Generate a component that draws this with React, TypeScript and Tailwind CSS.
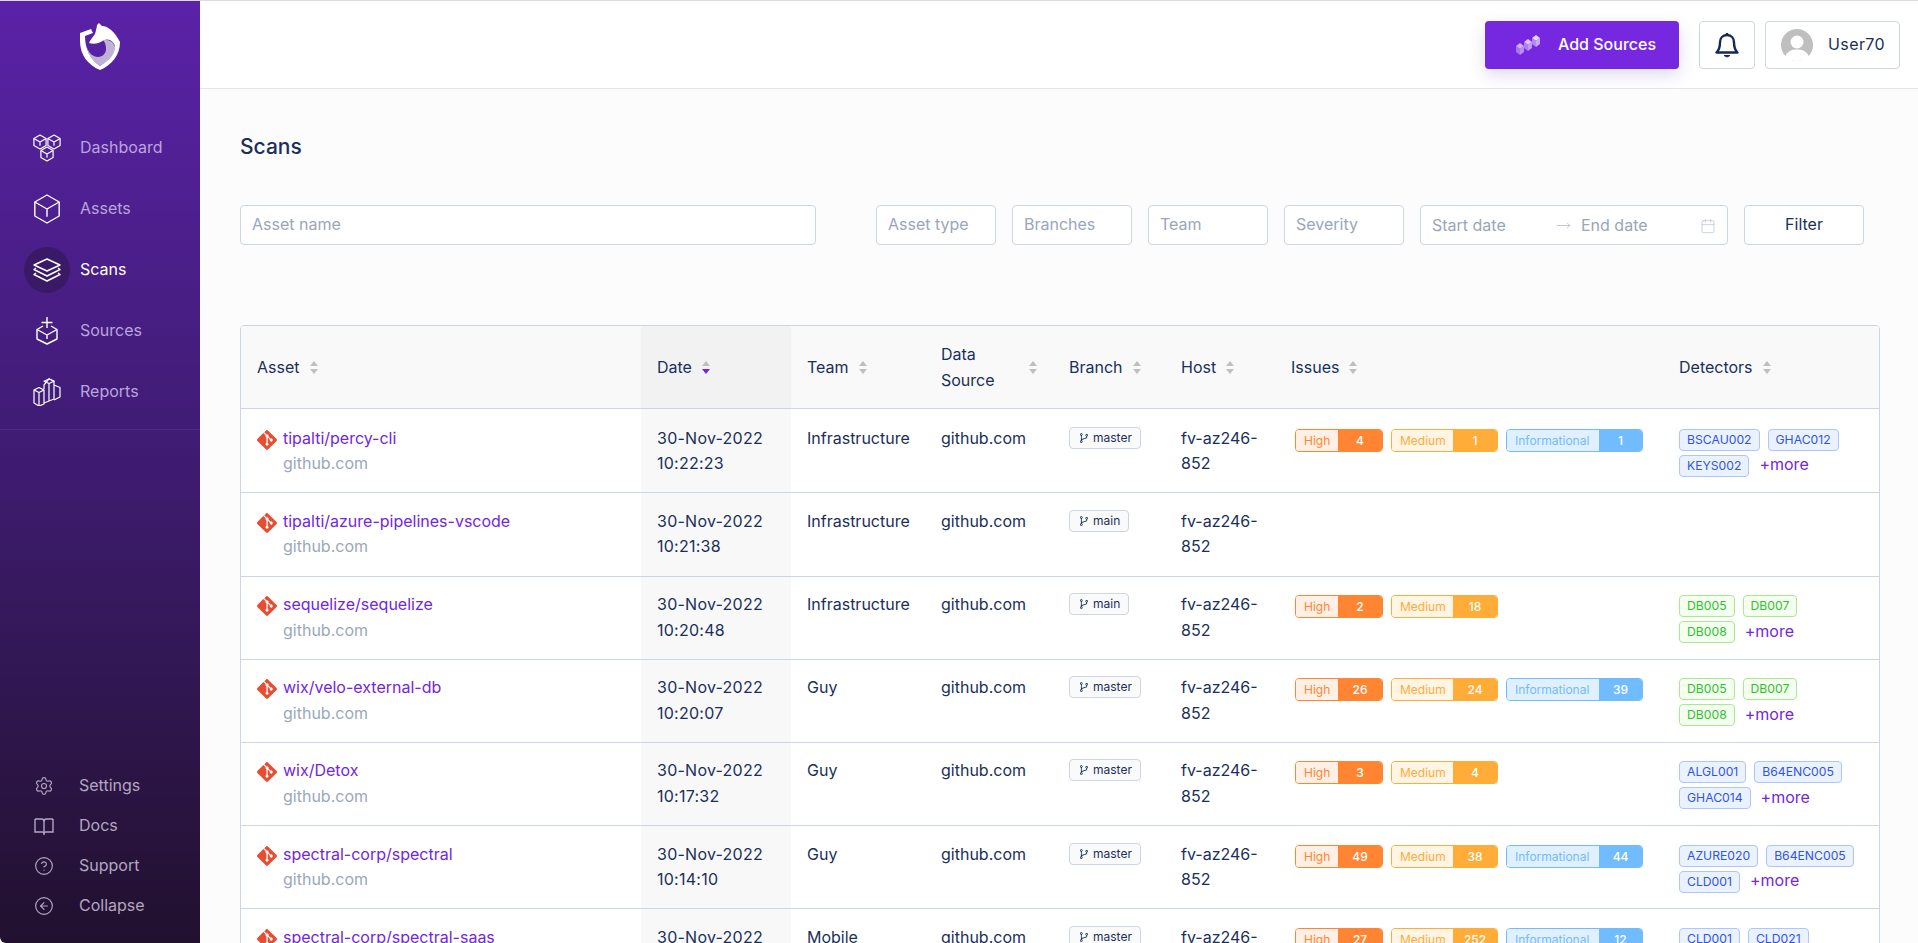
import React from "react";
import { SiGit } from "react-icons/si";
import { AiOutlineBranches } from "react-icons/ai";
import { Settings, CircleHelp, CircleArrowLeft, Calendar, MoveRight } from "lucide-react";

const hex = (cx: number, cy: number, r: number) => {
  const w = r * 0.87;
  const h = r * 0.5;
  return `M${cx} ${cy - r}L${cx + w} ${cy - h}V${cy + h}L${cx} ${cy + r}L${cx - w} ${cy + h}V${cy - h}Z`;
};
const why = (cx: number, cy: number, r: number) => {
  const w = r * 0.87;
  const h = r * 0.5;
  return `M${cx - w} ${cy - h}L${cx} ${cy}L${cx + w} ${cy - h}M${cx} ${cy}V${cy + r * 0.55}`;
};

function Logo() {
  return (
    <svg width="40" height="50" viewBox="0 0 40 50">
      <path d="M0 12L11 8L13 12L5 15C5 28 10 38 20 45C30 38 35 30 35 21L40 21C40 34 32 44 20 49C8 44 0 34 0 20Z" fill="#fff" />
      <path d="M23 19C30 18 35 22 35 28C34 35 27 41 20 45C13 40 8 34 6 24C8 31 12 36 18 36C23 36 26 32 26 28C26 24 25 21 23 19Z" fill="#bfb2d6" />
      <path d="M19 2L22 5C28 5 35 11 40 21L36 27C34 20 29 17 24 19C20 22 14 24 9 22C10 19 13 16 15 13C16 9 17 6 17 4Z" fill="#fff" />
    </svg>
  );
}

function IconDashboard() {
  return (
    <svg width="28" height="28" viewBox="0 0 28 28" fill="none" stroke="#fff" strokeWidth="1.2" strokeLinejoin="round">
      {[[7, 8], [21, 8], [14, 20]].map(([x, y]) => (
        <g key={x}>
          <path d={hex(x, y, 7)} />
          <path d={why(x, y, 7)} />
        </g>
      ))}
    </svg>
  );
}
function IconAssets() {
  return (
    <svg width="28" height="30" viewBox="0 0 28 30" fill="none" stroke="#fff" strokeWidth="1.4" strokeLinejoin="round">
      <path d={hex(14, 15, 14)} />
      <path d={why(14, 15, 14)} />
    </svg>
  );
}
function IconScans() {
  return (
    <svg width="28" height="24" viewBox="0 0 28 24" fill="none" stroke="#fff" strokeWidth="1.4" strokeLinejoin="round">
      <path d="M14 1L27 7L14 13L1 7Z" />
      <path d="M3 10L1 11.5L14 18L27 11.5L25 10" />
      <path d="M3 15L1 16.5L14 23L27 16.5L25 15" />
    </svg>
  );
}
function IconSources() {
  return (
    <svg width="22" height="28" viewBox="0 0 22 28" fill="none" stroke="#fff" strokeWidth="1.4" strokeLinejoin="round">
      <path d="M11 0V11M5.5 5.5H16.5" />
      <path d="M7 9L1 12.5V22L11 27L21 22V12.5L15 9" />
      <path d="M1 12.5L11 18L21 12.5M11 18V22" />
    </svg>
  );
}
function IconReports() {
  return (
    <svg width="28" height="28" viewBox="0 0 28 28" fill="none" stroke="#fff" strokeWidth="1.2" strokeLinejoin="round">
      <path d="M1 12L6 9.5L11 12V26L6 28L1 25Z" />
      <path d="M1 12L6 14.5L11 12M6 14.5V28" />
      <path d="M11 11V7L16 0.8L21 3V21L11 25" />
      <path d="M11 3.2L16 1L21 3.2L16 5.5ZM16 5.5V23" />
      <path d="M21 7L27 9.5V19L21 22" />
    </svg>
  );
}

function IconBook() {
  return (
    <svg width="20" height="20" viewBox="0 0 20 20" fill="none" stroke="#b3a6c0" strokeWidth="1.4">
      <path d="M1 3H7.5C9 3 10 4 10 5.5V19" />
      <path d="M19 3H12.5C11 3 10 4 10 5.5" />
      <path d="M1 3V16H8.5C9.4 16 10 16.5 10 17.5C10 16.5 10.6 16 11.5 16H19V3" />
    </svg>
  );
}

function IconCubes() {
  const cube = (x: number, y: number, o: number) => (
    <g key={x} opacity={o}>
      <path d={`M${x} ${y + 3}L${x + 4} ${y}L${x + 8} ${y + 3}L${x + 4} ${y + 6}Z`} fill="#e6d5fb" />
      <path d={`M${x} ${y + 3}L${x + 4} ${y + 6}V${y + 12}L${x} ${y + 9}Z`} fill="#b48af0" />
      <path d={`M${x + 8} ${y + 3}L${x + 4} ${y + 6}V${y + 12}L${x + 8} ${y + 9}Z`} fill="#c9a8f5" />
    </g>
  );
  return (
    <svg width="26" height="22" viewBox="0 0 26 22">
      {cube(0, 9, 0.8)}
      {cube(8, 5, 0.9)}
      {cube(16, 1, 1)}
    </svg>
  );
}

function IconBell() {
  return (
    <svg width="24" height="26" viewBox="0 0 24 26" fill="none" stroke="#14295a" strokeWidth="2.4" strokeLinejoin="round">
      <path d="M12 3C7.5 3 5 6.5 5 10.5C5 15.5 4 18 1.5 20.5H22.5C20 18 19 15.5 19 10.5C19 6.5 16.5 3 12 3Z" />
      <path d="M12 1V3" />
      <path d="M9 23.5H15L12 25Z" fill="#14295a" strokeWidth="1" />
    </svg>
  );
}

function Avatar() {
  return (
    <svg width="32" height="32" viewBox="0 0 32 32">
      <circle cx="16" cy="16" r="16" fill="#bfbfbf" />
      <circle cx="16" cy="13" r="6.5" fill="#fff" />
      <path d="M4 28C6 22 11 20.5 16 20.5C21 20.5 26 22 28 28C25 30.5 21 32 16 32C11 32 7 30.5 4 28Z" fill="#fff" />
    </svg>
  );
}

function Sort({ active }: { active?: boolean }) {
  return (
    <svg width="8" height="13" viewBox="0 0 8 13" className="ml-2.5 shrink-0">
      <path d="M4 0L8 5H0Z" fill="#bfbfbf" />
      <path d="M4 13L8 8H0Z" fill={active ? "#7326e0" : "#bfbfbf"} />
    </svg>
  );
}

const nav = [
  { label: "Dashboard", icon: <IconDashboard /> },
  { label: "Assets", icon: <IconAssets /> },
  { label: "Scans", icon: <IconScans />, active: true },
  { label: "Sources", icon: <IconSources /> },
  { label: "Reports", icon: <IconReports /> },
];

const foot = [
  { label: "Settings", icon: <Settings size={20} strokeWidth={1.4} /> },
  { label: "Docs", icon: <IconBook /> },
  { label: "Support", icon: <CircleHelp size={20} strokeWidth={1.4} /> },
  { label: "Collapse", icon: <CircleArrowLeft size={20} strokeWidth={1.4} /> },
];

type Row = {
  asset: string;
  time: string;
  team: string;
  branch: string;
  high?: number;
  medium?: number;
  info?: number;
  tags: string[];
  green?: boolean;
  more?: boolean;
};

const rows: Row[] = [
  { asset: "tipalti/percy-cli", time: "10:22:23", team: "Infrastructure", branch: "master", high: 4, medium: 1, info: 1, tags: ["BSCAU002", "GHAC012", "KEYS002"], more: true },
  { asset: "tipalti/azure-pipelines-vscode", time: "10:21:38", team: "Infrastructure", branch: "main", tags: [] },
  { asset: "sequelize/sequelize", time: "10:20:48", team: "Infrastructure", branch: "main", high: 2, medium: 18, tags: ["DB005", "DB007", "DB008"], green: true, more: true },
  { asset: "wix/velo-external-db", time: "10:20:07", team: "Guy", branch: "master", high: 26, medium: 24, info: 39, tags: ["DB005", "DB007", "DB008"], green: true, more: true },
  { asset: "wix/Detox", time: "10:17:32", team: "Guy", branch: "master", high: 3, medium: 4, tags: ["ALGL001", "B64ENC005", "GHAC014"], more: true },
  { asset: "spectral-corp/spectral", time: "10:14:10", team: "Guy", branch: "master", high: 49, medium: 38, info: 44, tags: ["AZURE020", "B64ENC005", "CLD001"], more: true },
  { asset: "spectral-corp/spectral-saas", time: "10:12:44", team: "Mobile", branch: "master", high: 27, medium: 252, info: 12, tags: ["CLD001", "CLD021"] },
];

function HighBadge({ n }: { n: number }) {
  return (
    <span className="flex h-[23px] w-[88px] overflow-hidden rounded-[4px] border border-[#ff8533] text-xs leading-[21px]">
      <span className="w-[42px] bg-[#fff0e5] pl-[8px] text-[#ff8533]">High</span>
      <span className="flex-1 bg-[#ff8533] text-center font-medium text-white">{n}</span>
    </span>
  );
}
function MediumBadge({ n }: { n: number }) {
  return (
    <span className="flex h-[23px] w-[107px] overflow-hidden rounded-[4px] border border-[#ffac38] text-xs leading-[21px]">
      <span className="w-[61px] bg-[#fff5e5] pl-[8px] text-[#ffac38]">Medium</span>
      <span className="flex-1 bg-[#ffac38] text-center font-medium text-white">{n}</span>
    </span>
  );
}
function InfoBadge({ n }: { n: number }) {
  return (
    <span className="flex h-[23px] w-[137px] overflow-hidden rounded-[4px] border border-[#70bcff] text-xs leading-[21px]">
      <span className="w-[92px] bg-[#e0f0ff] pl-[8px] text-[#70bcff]">Informational</span>
      <span className="flex-1 bg-[#70bcff] text-center font-medium text-white">{n}</span>
    </span>
  );
}

function Head({ children, active, bg }: { children: React.ReactNode; active?: boolean; bg?: boolean }) {
  return (
    <th className={`border-b border-[#ccd6e2] px-4 pb-[15px] pt-4 text-left font-normal ${bg ? "bg-[#f2f2f3]" : "bg-[#f9f9fa]"}`}>
      <div className="flex items-center">
        <span>{children}</span>
        <Sort active={active} />
      </div>
    </th>
  );
}

function Field({ label, w }: { label: string; w: string }) {
  return (
    <div className={`flex h-10 items-center rounded-[4px] border border-[#ccd6e2] bg-white px-[11px] pb-px text-[#9aa6b9] ${w}`}>
      {label}
    </div>
  );
}

export default function App() {
  return (
    <div className="flex h-screen overflow-hidden border-t border-[#dcdcdc] bg-[#fcfcfc] font-['Inter',sans-serif] text-base leading-[25.6px] text-[#1a2f5a]">
      <aside className="flex w-[200px] shrink-0 flex-col rounded-bl-[6px] bg-gradient-to-b from-[#5a22a8] via-[#3e1b70] to-[#21102e]">
        <div className="flex justify-center pt-[20px]">
          <Logo />
        </div>
        <nav className="mt-[46px] flex flex-col border-b border-[#52288f] pb-[7px]">
          {nav.map((n) => (
            <div key={n.label} className="flex h-[61px] items-center pl-[24px]">
              <div className={`flex h-[46px] w-[46px] items-center justify-center rounded-full ${n.active ? "bg-[#3a1a66]" : ""}`}>{n.icon}</div>
              <span className={`ml-[10px] ${n.active ? "text-white" : "text-[#b9a5dc]"}`}>{n.label}</span>
            </div>
          ))}
        </nav>
        <div className="mt-auto flex flex-col pb-[17px] text-[#b3a6c0]">
          {foot.map((f) => (
            <div key={f.label} className="flex h-10 items-center pl-[34px]">
              <span className="flex w-[20px] justify-center">{f.icon}</span>
              <span className="ml-[25px]">{f.label}</span>
            </div>
          ))}
        </div>
      </aside>
      <div className="flex min-w-0 flex-1 flex-col">
        <header className="flex h-[88px] shrink-0 items-center justify-end border-b border-[#e5e5e5] bg-white pr-[18px]">
          <button className="flex h-12 w-[194px] items-center rounded-[4px] bg-[#7528e0] pl-[31px] font-medium text-white shadow-[0_6px_16px_rgba(80,50,160,0.18)]">
            <IconCubes />
            <span className="ml-[16px]">Add Sources</span>
          </button>
          <button className="ml-5 flex h-12 w-14 items-center justify-center rounded-[4px] border border-[#ccd6e2] bg-white">
            <IconBell />
          </button>
          <button className="ml-[10px] flex h-12 w-[135px] items-center rounded-[4px] border border-[#ccd6e2] bg-white pl-[15px]">
            <Avatar />
            <span className="ml-[15px] tracking-[0.4px]">User70</span>
          </button>
        </header>
        <main className="flex-1 pl-10 pr-[38px] pt-[42px]">
          <h1 className="h-8 text-[21px] font-medium leading-8">Scans</h1>
          <div className="mt-[42px] flex pr-4">
            <Field label="Asset name" w="w-[576px]" />
            <div className="ml-auto flex gap-4">
              <Field label="Asset type" w="w-[120px]" />
              <Field label="Branches" w="w-[120px]" />
              <Field label="Team" w="w-[120px]" />
              <Field label="Severity" w="w-[120px]" />
              <div className="flex h-10 w-[308px] items-center rounded-[4px] border border-[#ccd6e2] bg-white px-[11px] pt-px text-[#9aa6b9]">
                <span className="w-[124px]">Start date</span>
                <MoveRight size={15} strokeWidth={1} className="mr-[10px]" />
                <span>End date</span>
                <Calendar size={16} strokeWidth={1} className="ml-auto text-[#b5bdca]" />
              </div>
              <button className="h-10 w-[120px] rounded-[4px] border border-[#ccd6e2] bg-white pb-px">Filter</button>
            </div>
          </div>
          <div className="mt-20 overflow-hidden rounded-t-[4px] border border-[#ccd6e2]">
            <table className="w-full table-fixed bg-white">
              <colgroup>
                <col className="w-[400px]" />
                <col className="w-[150px]" />
                <col className="w-[134px]" />
                <col className="w-[128px]" />
                <col className="w-[112px]" />
                <col className="w-[110px]" />
                <col className="w-[388px]" />
                <col className="w-[216px]" />
              </colgroup>
              <thead>
                <tr>
                  <Head>Asset</Head>
                  <Head active bg>Date</Head>
                  <Head>Team</Head>
                  <Head>Data Source</Head>
                  <Head>Branch</Head>
                  <Head>Host</Head>
                  <Head>Issues</Head>
                  <Head>Detectors</Head>
                </tr>
              </thead>
              <tbody>
                {rows.map((r) => (
                  <tr key={r.asset} className="align-top [&:first-child>td]:pt-[16.5px]">
                    <td className="border-b border-[#ccd6e2] px-4 py-[15.5px]">
                      <div className="flex">
                        <SiGit size={20} color="#e84d31" className="mr-[6px] mt-[4px] shrink-0" />
                        <div>
                          <div className="text-[#7326e0]">{r.asset}</div>
                          <div className="text-[#9aa8bc]">github.com</div>
                        </div>
                      </div>
                    </td>
                    <td className="border-b border-[#ccd6e2] bg-[#f8f8f9] px-4 py-[15.5px] tracking-[0.25px]">
                      30-Nov-2022
                      <br />
                      {r.time}
                    </td>
                    <td className="border-b border-[#ccd6e2] px-4 py-[15.5px]">{r.team}</td>
                    <td className="border-b border-[#ccd6e2] px-4 py-[15.5px]">github.com</td>
                    <td className="border-b border-[#ccd6e2] px-4 py-[15.5px]">
                      <span className="inline-flex h-[22px] items-center gap-[3px] rounded-[4px] border border-[#ccd6e2] bg-[#fafafa] px-[8px] text-xs leading-5">
                        <AiOutlineBranches size={12} />
                        {r.branch}
                      </span>
                    </td>
                    <td className="border-b border-[#ccd6e2] py-[15.5px] pl-4 pr-2">fv-az246-852</td>
                    <td className="border-b border-[#ccd6e2] py-[15.5px] pl-5 pr-0">
                      <div className="flex gap-2 pt-[3px]">
                        {r.high !== undefined && <HighBadge n={r.high} />}
                        {r.medium !== undefined && <MediumBadge n={r.medium} />}
                        {r.info !== undefined && <InfoBadge n={r.info} />}
                      </div>
                    </td>
                    <td className="border-b border-[#ccd6e2] py-[15.5px] pl-4 pr-3">
                      <div className="flex h-[51px] flex-wrap content-start items-center gap-y-1 pt-[3px]">
                        {r.tags.map((t) => (
                          <span
                            key={t}
                            className={`mr-2 h-[22px] rounded-[4px] border px-[7px] text-[12.2px] leading-5 ${
                              r.green ? "border-[#a8eb8f] bg-[#f5fff0] text-[#2fbf2f]" : "border-[#adc6ff] bg-[#ebf2ff] text-[#2f54eb]"
                            }`}
                          >
                            {t}
                          </span>
                        ))}
                        {r.more && <span className="-mt-[3px] ml-0.5 h-[22px] leading-[22px] text-[#7326e0]">+more</span>}
                      </div>
                    </td>
                  </tr>
                ))}
              </tbody>
            </table>
          </div>
        </main>
      </div>
    </div>
  );
}
